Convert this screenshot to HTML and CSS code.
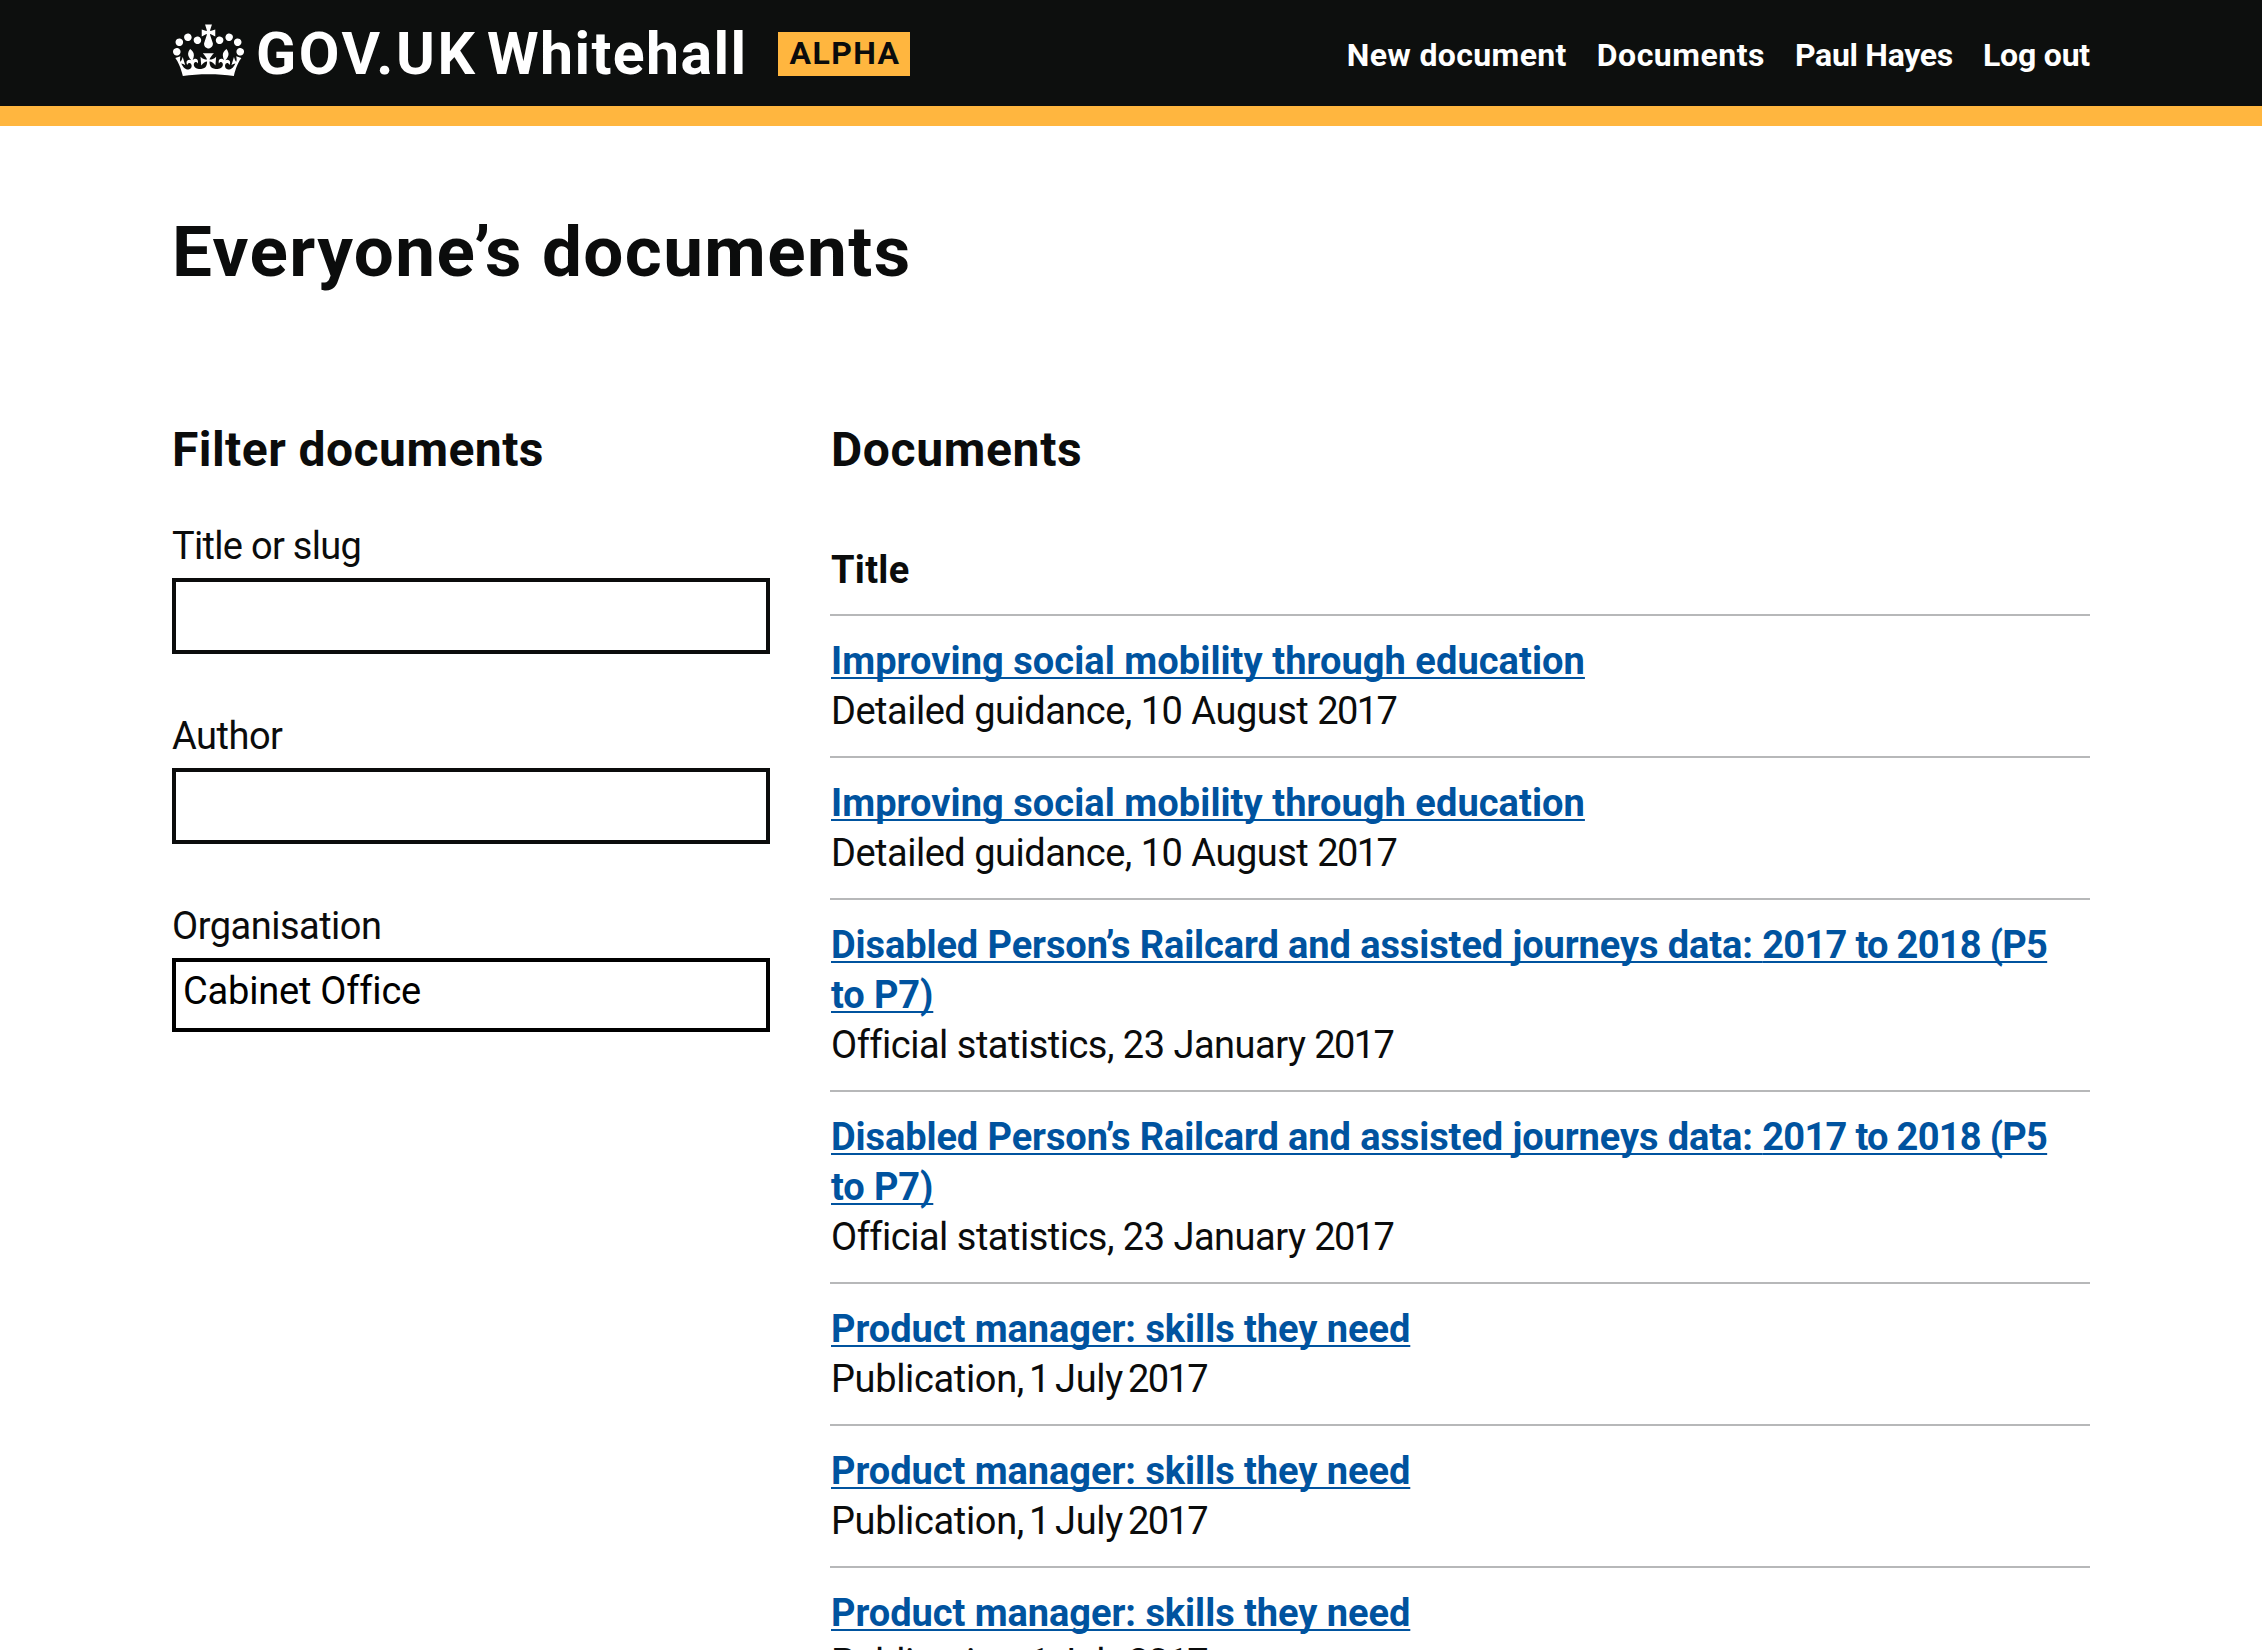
FILE: index.html
```html
<!DOCTYPE html>
<html lang="en">
<head>
<meta charset="utf-8">
<title>Everyone’s documents - GOV.UK Whitehall</title>
<link rel="stylesheet" href="styles.css">
</head>
<body>
<header class="header">
  <div class="container header-row">
    <a class="brand" href="#">
      <svg class="crown" viewBox="0 0 132 97" aria-hidden="true"><path fill="currentColor" fill-rule="evenodd" d="M25 30.2c3.5 1.5 7.7-.2 9.1-3.7 1.5-3.6-.2-7.8-3.9-9.2-3.6-1.4-7.6.3-9.1 3.9-1.4 3.5.3 7.5 3.9 9zM9 39.5c3.6 1.5 7.8-.2 9.2-3.7 1.5-3.6-.2-7.8-3.9-9.1-3.6-1.5-7.6.2-9.1 3.8-1.4 3.5.3 7.5 3.8 9zM4.4 57.2c3.5 1.5 7.7-.2 9.1-3.8 1.5-3.6-.2-7.7-3.9-9.1-3.5-1.5-7.6.3-9.1 3.8-1.4 3.5.3 7.6 3.9 9.1zm38.3-21.4c3.5 1.5 7.7-.2 9.1-3.8 1.5-3.6-.2-7.7-3.9-9.1-3.6-1.5-7.6.3-9.1 3.8-1.3 3.6.4 7.7 3.9 9.1zm64.4-5.6c-3.6 1.5-7.8-.2-9.1-3.7-1.5-3.6.2-7.8 3.8-9.2 3.6-1.4 7.7.3 9.2 3.9 1.3 3.5-.4 7.5-3.9 9zm15.9 9.3c-3.6 1.5-7.7-.2-9.1-3.7-1.5-3.6.2-7.8 3.7-9.1 3.6-1.5 7.7.2 9.2 3.8 1.5 3.5-.3 7.5-3.8 9zm4.7 17.7c-3.6 1.5-7.8-.2-9.2-3.8-1.5-3.6.2-7.7 3.9-9.1 3.6-1.5 7.7.3 9.2 3.8 1.3 3.5-.4 7.6-3.9 9.1zM89.3 35.8c-3.6 1.5-7.8-.2-9.2-3.8-1.4-3.6.2-7.7 3.9-9.1 3.6-1.5 7.7.3 9.2 3.8 1.4 3.6-.3 7.7-3.9 9.1zM69.7 17.7l8.9 4.7V9.3l-8.9 2.8c-.2-.3-.5-.6-.9-.9L72.4 0H59.6l3.5 11.2c-.3.3-.6.5-.9.9l-8.8-2.8v13.1l8.8-4.7c.3.3.6.7.9.9l-5 15.4v.1c-.2.8-.4 1.6-.4 2.4 0 4.1 3.1 7.5 7 8.1h.2c.3 0 .7.1 1 .1.4 0 .7 0 1-.1h.2c4-.6 7.1-4.1 7.1-8.1 0-.8-.1-1.7-.4-2.4V34l-5.1-15.4c.4-.2.7-.6 1-.9zM66 92.8c16.9 0 32.8 1.1 47.1 3.2 4-16.9 8.9-26.7 14-33.5l-9.6-3.4c1 4.9 1.1 7.2 0 10.2-1.5-1.4-3-4.3-4.2-8.7L108.6 76c2.8-2 5-3.2 7.5-3.3-4.4 9.4-10 11.9-13.6 11.2-4.3-.8-6.3-4.6-5.6-7.9 1-4.7 5.7-5.9 8-.5 4.3-8.7-3-11.4-7.6-8.8 7.1-7.2 7.9-13.5 2.1-21.1-8 6.1-8.1 12.3-4.5 20.8-4.7-5.4-12.1-2.5-9.5 6.2 3.4-5.2 7.9-2 7.2 3.1-.6 4.3-6.4 7.8-13.5 7.2-10.3-.9-10.9-8-11.2-13.8 2.5-.5 7.1 1.8 11 7.3L80.2 60c-4.1 4.4-8 5.3-12.3 5.4 1.4-4.4 8-11.6 8-11.6H55.5s6.4 7.2 7.9 11.6c-4.2-.1-8-1-12.3-5.4l1.4 16.4c3.9-5.5 8.5-7.7 10.9-7.3-.3 5.8-.9 12.8-11.1 13.8-7.2.6-12.9-2.9-13.5-7.2-.7-5 3.8-8.3 7.1-3.1 2.7-8.7-4.6-11.6-9.4-6.2 3.7-8.5 3.6-14.7-4.6-20.8-5.8 7.6-5 13.9 2.2 21.1-4.7-2.6-11.9.1-7.7 8.8 2.3-5.5 7.1-4.2 8.1.5.7 3.3-1.3 7.1-5.7 7.9-3.5.7-9-1.8-13.5-11.2 2.5.1 4.7 1.3 7.5 3.3l-4.7-15.4c-1.2 4.4-2.7 7.2-4.3 8.7-1.1-3-.9-5.3 0-10.2l-9.5 3.4c5 6.9 9.9 16.7 14 33.5 14.8-2.1 30.8-3.2 47.7-3.2z"/></svg>
      <span class="brand-gov">GOV.UK</span>
      <span class="brand-product">Whitehall</span>
    </a>
    <strong class="phase">ALPHA</strong>
    <nav class="nav">
      <a class="nav-new" href="#">New document</a>
      <a class="nav-docs" href="#">Documents</a>
      <a class="nav-user" href="#">Paul Hayes</a>
      <a class="nav-out" href="#">Log out</a>
    </nav>
  </div>
</header>
<main class="container">
  <h1>Everyone’s documents</h1>
  <div class="columns">
    <form class="filters">
      <h2 class="filters-title">Filter documents</h2>
      <label class="label-title" for="title">Title or slug</label>
      <input id="title" type="text">
      <label class="label-author" for="author">Author</label>
      <input id="author" type="text">
      <label class="label-org" for="org">Organisation</label>
      <input id="org" class="select" type="text" value="Cabinet Office">
    </form>
    <section class="documents">
      <h2 class="documents-title">Documents</h2>
      <div class="list-head">Title</div>
      <article class="row"><a class="t-improving" href="#">Improving social mobility through education</a><p class="m-guidance">Detailed guidance, 10 August <span class="year">2017</span></p></article>
      <article class="row"><a class="t-improving" href="#">Improving social mobility through education</a><p class="m-guidance">Detailed guidance, 10 August <span class="year">2017</span></p></article>
      <article class="row"><a class="t-railcard" href="#">Disabled Person’s Railcard and assisted journeys data: <span class="range">2017 to 2018 (P5</span> <br>to P7)</a><p class="m-stats">Official statistics, 23 January <span class="year">2017</span></p></article>
      <article class="row"><a class="t-railcard" href="#">Disabled Person’s Railcard and assisted journeys data: <span class="range">2017 to 2018 (P5</span> <br>to P7)</a><p class="m-stats">Official statistics, 23 January <span class="year">2017</span></p></article>
      <article class="row"><a class="t-product" href="#">Product manager: skills they need</a><p class="m-pub">Publication, 1 July <span class="year">2017</span></p></article>
      <article class="row"><a class="t-product" href="#">Product manager: skills they need</a><p class="m-pub">Publication, 1 July <span class="year">2017</span></p></article>
      <article class="row"><a class="t-product" href="#">Product manager: skills they need</a><p class="m-pub">Publication, 1 July <span class="year">2017</span></p></article>
    </section>
  </div>
</main>
</body>
</html>
```
FILE: styles.css
```css
* { box-sizing: border-box; }
html, body { height: 1650px; overflow: hidden; }
body {
  margin: 0;
  background: #fff;
  color: #0b0c0c;
  font: 38px/50px Roboto, "Liberation Sans", sans-serif;
  font-variant-ligatures: no-common-ligatures;
}
h1, h2, p { margin: 0; }
.container { width: 1918px; margin: 0 auto; }

/* Header */
.header { height: 126px; background: #0d0f0e; border-bottom: 20px solid #ffb63f; }
.header-row { display: flex; height: 106px; color: #fff; }
.brand { display: flex; color: #fff; text-decoration: none; font-weight: 700; font-size: 59px; line-height: 60px; white-space: nowrap; }
.crown { width: 71px; height: 53px; margin: 24px 0 0 1px; }
.brand-gov { width: 231px; margin: 24px 0 0 12px; letter-spacing: 2.6px; }
.brand-product { width: 275px; margin-top: 24px; letter-spacing: 1.4px; }
.phase { width: 132px; height: 44px; margin: 32px 0 0 16px; padding-left: 2px; background: #ffb63f; color: #0b0c0c; font-size: 32px; line-height: 42px; text-align: center; letter-spacing: 1.4px; }
.nav { display: flex; gap: 30px; margin: 35px 0 0 auto; font-size: 32px; line-height: 40px; font-weight: 700; white-space: nowrap; }
.nav a { color: #fff; text-decoration: none; }
.nav-new { letter-spacing: .36px; }
.nav-docs { letter-spacing: .5px; }
.nav-user { letter-spacing: -.3px; }
.nav-out { letter-spacing: -.2px; }

/* Page */
h1 { padding-top: 85px; height: 294px; font-size: 71px; line-height: 82px; letter-spacing: 1.42px; }
h2 { font-size: 48px; line-height: 60px; }
.columns { display: flex; gap: 60px; white-space: nowrap; }

/* Filters */
.filters { display: flex; flex-direction: column; width: 598px; }
.filters-title { margin-bottom: 41px; letter-spacing: .45px; }
.label-title { letter-spacing: -.7px; }
.label-author, .label-org { letter-spacing: -.5px; }
.filters input {
  width: 598px; height: 76px; margin: 7px 0 57px; padding: 0 7px;
  border: 4px solid #0b0c0c; border-radius: 0; background: #fff;
  color: #000; font: inherit; letter-spacing: -.2px;
}
.filters .select { height: 74px; padding-bottom: 8px; border-color: #000; }

/* Document list */
.documents { flex: 1; }
.documents-title { margin-bottom: 65px; padding-left: 1px; letter-spacing: .65px; }
.list-head { height: 71px; padding-left: 1px; border-bottom: 2px solid #b7b8b9; font-weight: 700; letter-spacing: .3px; }
.row { padding: 20px 0 20px 1px; border-bottom: 2px solid #b7b8b9; }
.row a { color: #00539f; font-weight: 700; text-decoration: underline; text-decoration-thickness: 2px; text-underline-offset: 3px; text-decoration-skip-ink: none; }
.t-improving { letter-spacing: .06px; }
.t-product { letter-spacing: -.05px; }
.t-railcard { letter-spacing: -.1px; }
.range { letter-spacing: -.7px; }
.m-guidance, .m-stats { letter-spacing: -.5px; }
.m-pub { letter-spacing: -.35px; word-spacing: -4px; }
.year { letter-spacing: -1.6px; }
```
